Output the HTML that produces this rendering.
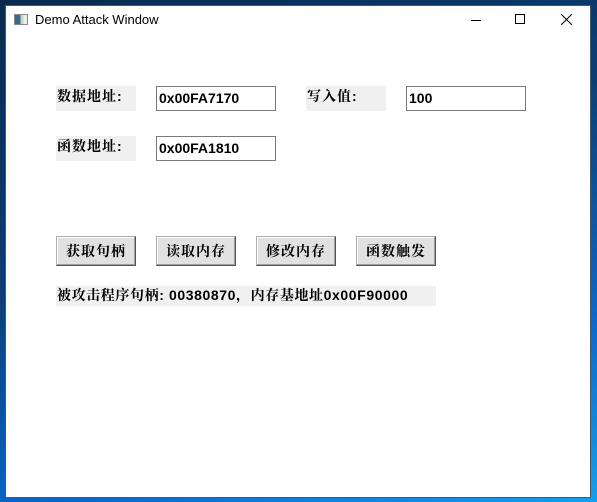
<!DOCTYPE html><html><head><meta charset="utf-8"><style>
*{margin:0;padding:0;box-sizing:border-box}
body{width:597px;height:502px;overflow:hidden;background:linear-gradient(160deg,#0a2a4e 0%,#0b3d75 40%,#0a6ad0 75%,#12a0f0 100%);position:relative;font-family:"Liberation Sans","Noto Serif CJK SC","WenQuanYi Zen Hei",sans-serif}
.win{position:absolute;left:5px;top:5px;width:586px;height:493px;background:#fff;border:1px solid #3a5a7a}
.a{position:absolute}
.lab{background:#f0f0f0;font-weight:bold;font-size:14px;color:#000;line-height:20px;padding-left:1px;letter-spacing:1px}
.ed{border:1px solid #7a7a7a;background:#fff;font-weight:bold;font-size:14px;line-height:22px;padding-left:2px;font-family:"Liberation Sans",sans-serif}
.btn{background:#e1e1e1;border:1px solid #adadad;border-right-color:#555;border-bottom-color:#555;box-shadow:inset -1px -1px #a0a0a0,inset 1px 1px #fff;font-weight:bold;font-size:14px;text-align:center;line-height:28px;letter-spacing:1px}
</style></head><body>
<div class="win"></div>
<div class="a" style="left:14px;top:14px;width:14px;height:11px;border:1px solid #888;background:linear-gradient(90deg,#3a6a8a 0 45%,#c8d8c0 45% 70%,#eee 70%)"></div>
<div class="a" style="left:35px;top:12px;font-size:13px;color:#000">Demo Attack Window</div>
<div class="a" style="left:471px;top:20px;width:10px;height:1px;background:#000"></div>
<div class="a" style="left:515px;top:14px;width:10px;height:10px;border:1px solid #000"></div>
<svg class="a" style="left:561px;top:14px" width="11" height="11"><path d="M0 0L11 11M11 0L0 11" stroke="#000" stroke-width="1"/></svg>
<div class="a lab" style="left:56px;top:86px;width:80px;height:25px">数据地址:</div>
<div class="a ed" style="left:156px;top:86px;width:120px;height:25px">0x00FA7170</div>
<div class="a lab" style="left:306px;top:86px;width:80px;height:25px">写入值:</div>
<div class="a ed" style="left:406px;top:86px;width:120px;height:25px">100</div>
<div class="a lab" style="left:56px;top:136px;width:80px;height:25px">函数地址:</div>
<div class="a ed" style="left:156px;top:136px;width:120px;height:25px">0x00FA1810</div>
<div class="a btn" style="left:56px;top:236px;width:80px;height:30px">获取句柄</div>
<div class="a btn" style="left:156px;top:236px;width:80px;height:30px">读取内存</div>
<div class="a btn" style="left:256px;top:236px;width:80px;height:30px">修改内存</div>
<div class="a btn" style="left:356px;top:236px;width:80px;height:30px">函数触发</div>
<div class="a lab" style="left:56px;top:286px;width:380px;height:20px;line-height:18px;letter-spacing:0.6px">被攻击程序句柄: 00380870，内存基地址0x00F90000</div>
</body></html>
